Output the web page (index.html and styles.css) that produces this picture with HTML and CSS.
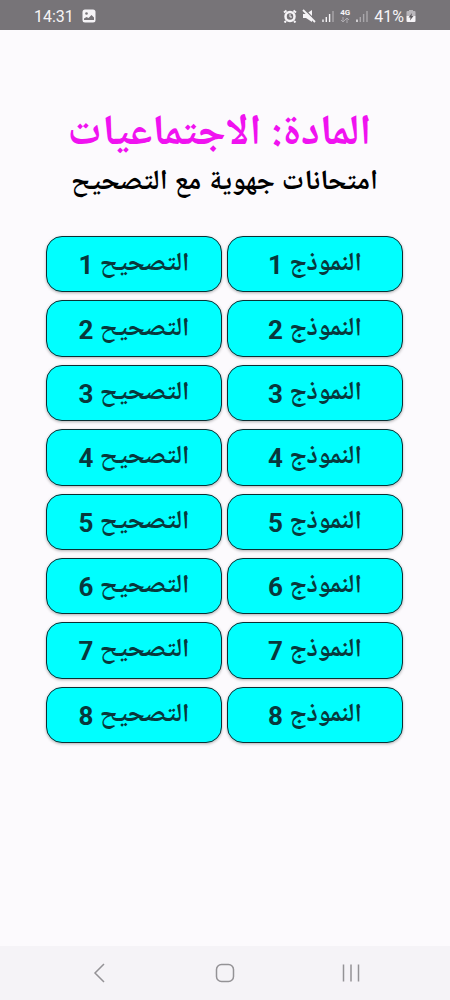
FILE: index.html
```html
<!DOCTYPE html>
<html lang="ar" dir="rtl">
<head>
    <meta charset="UTF-8">
    <meta name="viewport" content="width=device-width, initial-scale=1.0">
    <title>المادة: الاجتماعيات</title>
    <link rel="stylesheet" href="styles.css">
</head>
<body>
    <header class="status-bar" dir="ltr">
        <div class="status-group">
            <span>14:31</span>
            <svg width="14" height="14" viewBox="0 0 14 14">
                <rect x="0.5" y="0.5" width="13" height="13" rx="2.5" fill="#f6f4f7"/>
                <circle cx="4.5" cy="4.5" r="1.3" fill="#777478"/>
                <path d="M2 11V9.5L4.5 8L6.5 9L9.5 6L12 8.5V11Z" fill="#777478"/>
            </svg>
        </div>
        <div class="status-group status-icons">
            <svg width="14" height="14" viewBox="0 0 14 14" fill="none" stroke="#f6f4f7">
                <path d="M1 3.5L3.5 1.5M13 3.5L10.5 1.5M3 12L1.5 13.5M11 12L12.5 13.5" stroke-width="2"/>
                <circle cx="7" cy="7.5" r="4.5" stroke-width="2.5"/>
                <path d="M7 5V8H9"/>
            </svg>
            <svg width="14" height="14" viewBox="0 0 14 14">
                <path d="M1 5H4L10 1V13L4 9H1Z" fill="#f6f4f7"/>
                <path d="M2 0L14 12" stroke="#777478" stroke-width="1.5"/>
                <path d="M1 1L13 13" stroke="#f6f4f7" stroke-width="1.8"/>
            </svg>
            <svg width="14" height="14" viewBox="0 0 14 14" stroke="#f6f4f7" stroke-width="1.4">
                <path d="M2 13V10.5M5.3 13V8M8.6 13V5"/>
                <path d="M12 13V2" opacity="0.4"/>
            </svg>
            <div class="network">
                <span>4G</span>
                <svg width="10" height="6" viewBox="0 0 10 6" fill="none" stroke="#aeabb0">
                    <path d="M3 0V5M1 3L3 5L5 3M7 6V1M5 3L7 1L9 3"/>
                </svg>
            </div>
            <svg width="14" height="14" viewBox="0 0 14 14" stroke="#f6f4f7" stroke-width="1.4">
                <path d="M2 13V10.5"/>
                <path d="M5.3 13V8M8.6 13V5M12 13V2" opacity="0.4"/>
            </svg>
            <div class="charge">
                <span>41%</span>
                <svg width="10" height="14" viewBox="0 0 10 14">
                    <path d="M3 1H7V2H8.5Q9.5 2 9.5 3V7H0.5V3Q0.5 2 1.5 2H3Z" fill="#b9b6bb"/>
                    <path d="M0.5 7H9.5V12Q9.5 13 8.5 13H1.5Q0.5 13 0.5 12Z" fill="#f6f4f7"/>
                    <path d="M6 4L2.5 8.5H4.5L4 11.5L7.5 7H5.5Z" fill="#5f5c60"/>
                </svg>
            </div>
        </div>
    </header>

    <main>
        <h1>المادة: الاجتماعيات</h1>
        <h2>امتحانات جهوية مع التصحيح</h2>

        <div class="exams">
            <button>النموذج 1</button>
            <button>التصحيح 1</button>
            <button>النموذج 2</button>
            <button>التصحيح 2</button>
            <button>النموذج 3</button>
            <button>التصحيح 3</button>
            <button>النموذج 4</button>
            <button>التصحيح 4</button>
            <button>النموذج 5</button>
            <button>التصحيح 5</button>
            <button>النموذج 6</button>
            <button>التصحيح 6</button>
            <button>النموذج 7</button>
            <button>التصحيح 7</button>
            <button>النموذج 8</button>
            <button>التصحيح 8</button>
        </div>
    </main>

    <nav class="nav-bar" dir="ltr">
        <button aria-label="رجوع">
            <svg width="20" height="20" viewBox="0 0 20 20"><path d="M15 1L6 10L15 19"/></svg>
        </button>
        <button aria-label="الرئيسية">
            <svg width="20" height="20" viewBox="0 0 20 20"><rect x="1.5" y="1.5" width="17" height="17" rx="5"/></svg>
        </button>
        <button aria-label="التطبيقات الأخيرة">
            <svg width="20" height="20" viewBox="0 0 20 20"><path d="M2.5 1.5V18.5M10 1.5V18.5M17.5 1.5V18.5"/></svg>
        </button>
    </nav>
</body>
</html>
```

FILE: styles.css
```css
* {
    box-sizing: border-box;
}

body {
    margin: 0;
    min-height: 100vh;
    display: flex;
    flex-direction: column;
    background-color: #fcfafd;
    font-family: Roboto, "Noto Naskh Arabic UI", "Noto Sans Arabic UI", cursive;
}

.status-bar {
    display: flex;
    justify-content: space-between;
    align-items: center;
    height: 30px;
    padding: 2px 34px 0;
    background-color: #777478;
    color: #f6f4f7;
    font-size: 16px;
}

.status-group {
    display: flex;
    align-items: center;
    gap: 8px;
}

.status-icons {
    gap: 5px;
}

.charge {
    display: flex;
    align-items: center;
    gap: 2px;
}

.network {
    display: flex;
    flex-direction: column;
    align-items: center;
    font-size: 8px;
    font-weight: bold;
    line-height: 8px;
}

main {
    flex: 1;
    padding: 76px 47px 0 46px;
    text-align: center;
}

h1 {
    margin: 0;
    padding-right: 10px;
    color: #f012f0;
    font-family: "Noto Naskh Arabic UI", "Noto Sans Arabic UI", cursive;
    font-size: 43px;
    line-height: 56px;
}

h2 {
    margin: 4px 0 0;
    color: #000;
    font-size: 28px;
    font-weight: bold;
    line-height: 36px;
}

.exams {
    display: grid;
    grid-template-columns: 1fr 1fr;
    grid-auto-rows: 1fr;
    gap: 8px 5px;
    min-height: 507px;
    margin-top: 34px;
}

.exams button {
    padding: 2px 0 0;
    background-color: #00ffff;
    border: 1px solid #0b3034;
    border-radius: 16px;
    box-shadow: 0 1px 3px rgba(0, 0, 0, 0.3);
    color: #08383c;
    font-family: inherit;
    font-size: 26px;
    font-weight: bold;
    line-height: 36px;
    cursor: pointer;
}

.nav-bar {
    display: flex;
    justify-content: space-around;
    align-items: center;
    height: 54px;
    padding: 0 36px;
    background-color: #f5f3f7;
}

.nav-bar button {
    display: flex;
    padding: 0;
    border: none;
    background: none;
    cursor: pointer;
}

.nav-bar svg {
    fill: none;
    stroke: #949296;
    stroke-width: 1.5;
}
```
